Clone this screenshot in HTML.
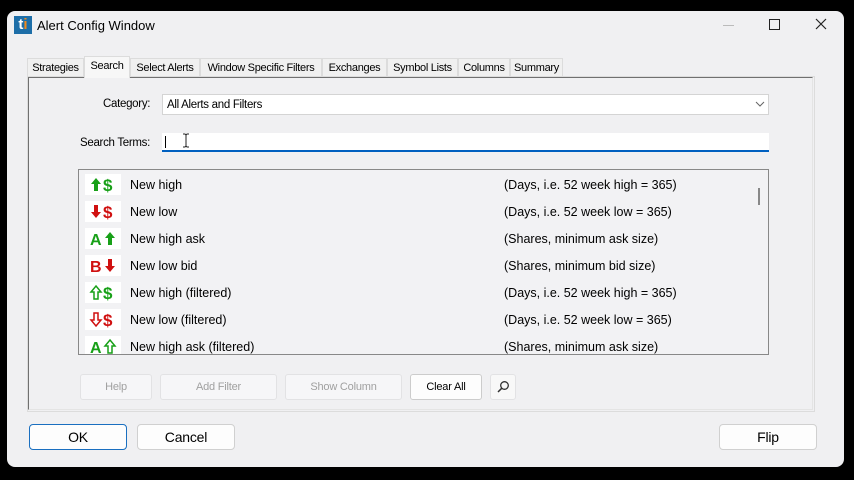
<!DOCTYPE html><html><head><style>
body{margin:0;width:854px;height:480px;background:#000;position:relative;overflow:hidden;font-family:"Liberation Sans",sans-serif;font-size:12px;color:#000}
.a{position:absolute}
.win{left:7px;top:11px;width:837px;height:456px;background:#f0f0f2;border-radius:8px}
.tab{position:absolute;top:58px;height:18px;line-height:19px;font-size:11px;text-align:center;background:#f0f0f0;border:1px solid #dcdcdc;border-bottom:none;box-sizing:border-box;letter-spacing:-0.3px}
.btn{position:absolute;background:#f6f6f8;border:1px solid #e2e2e4;border-radius:3px;box-sizing:border-box;text-align:center;font-size:11px;color:#a0a0a0;line-height:25px;letter-spacing:-0.2px}
.big{background:#fdfdfd;border:1px solid #d0d0d0;border-radius:4px;font-size:14px;color:#000;line-height:25px}
.row{position:absolute;left:80px;height:27px;width:676px;font-size:12.5px}
.row .t{position:absolute;left:50px;top:7px}
.row .d{position:absolute;left:424px;top:7px}
.ic{position:absolute;left:5px;top:3px;width:36px;height:21px;background:#fff}
</style></head><body>
<div class="a win"></div>
<div class="a" style="left:14px;top:16px;width:18px;height:18px;background:#1d6ea8;color:#fff;font-weight:bold;font-size:15px;line-height:18px;text-align:center">t<span style="color:#f08a1c">i</span></div>
<div class="a" style="left:37px;top:18px;font-size:13px">Alert Config Window</div>
<div class="a" style="left:723px;top:25px;width:11px;height:1px;background:#bbb"></div>
<div class="a" style="left:769px;top:19px;width:9px;height:9px;border:1px solid #222"></div>
<svg class="a" style="left:815px;top:18px" width="12" height="12"><path d="M1 1 11 11M11 1 1 11" stroke="#222" stroke-width="1.2"/></svg>

<div class="tab" style="left:27px;width:57px">Strategies</div>
<div class="tab" style="left:84px;width:46px;top:56px;height:22px;background:#f7f7f7;z-index:2">Search</div>
<div class="tab" style="left:130px;width:70px">Select Alerts</div>
<div class="tab" style="left:200px;width:122px">Window Specific Filters</div>
<div class="tab" style="left:322px;width:65px">Exchanges</div>
<div class="tab" style="left:387px;width:71px">Symbol Lists</div>
<div class="tab" style="left:458px;width:52px">Columns</div>
<div class="tab" style="left:510px;width:53px">Summary</div>

<div class="a" style="left:27px;top:76px;width:788px;height:336px;border:1px solid #dcdcdc;box-sizing:border-box;background:#f0f0f2"></div>
<div class="a" style="left:28px;top:77px;width:785px;height:333px;border-left:1px solid #707070;border-top:1px solid #707070;border-right:1px solid #e4e4e4;border-bottom:1px solid #e4e4e4;box-sizing:border-box"></div>

<div class="a" style="left:103px;top:98px;font-size:11.5px;letter-spacing:-0.3px">Category:</div>
<div class="a" style="left:162px;top:94px;width:607px;height:21px;background:#fff;border:1px solid #d4d4d4;box-sizing:border-box;font-size:11.5px;line-height:20px;padding-left:4px;letter-spacing:-0.3px">All Alerts and Filters</div>
<svg class="a" style="left:755px;top:101px" width="10" height="6"><path d="M1 1 5 5 9 1" fill="none" stroke="#666"/></svg>
<div class="a" style="left:80px;top:137px;font-size:11.5px;letter-spacing:-0.3px">Search Terms:</div>
<div class="a" style="left:162px;top:133px;width:607px;height:19px;background:#fff;border-bottom:2px solid #0060c0;box-sizing:border-box"></div>
<div class="a" style="left:165px;top:136px;width:1px;height:12px;background:#000"></div>
<svg class="a" style="left:182px;top:133px" width="8" height="15"><path d="M1 1h2l1 1 1-1h2M4 2v11M1 14h2l1-1 1 1h2" fill="none" stroke="#222"/></svg>

<div class="a" style="left:78px;top:169px;width:691px;height:186px;background:#f2f2f4;border:1px solid #888;box-sizing:border-box;overflow:hidden">
<div class="a" style="left:679px;top:18px;width:2px;height:17px;background:#888"></div>
</div>
<svg width="0" height="0" style="position:absolute"><defs>
<path id="su" d="M5 1 10 7H7V14H3V7H0Z"/>
<path id="sd" d="M5 14 10 8H7V1H3V8H0Z"/>
</defs></svg>
<div style="position:absolute;left:0;top:0;width:768px;height:354px;overflow:hidden">
<div class="row" style="top:171px"><svg class="ic" viewBox="0 0 36 21"><g transform="translate(6,3)" fill="#18a018"><use href="#su"/></g><text x="18" y="17" font-family="Liberation Sans" font-weight="bold" font-size="17" fill="#18a018">$</text></svg><div class="t">New high</div><div class="d">(Days, i.e. 52 week high = 365)</div></div>
<div class="row" style="top:198px"><svg class="ic" viewBox="0 0 36 21"><g transform="translate(6,3)" fill="#d01010"><use href="#sd"/></g><text x="18" y="17" font-family="Liberation Sans" font-weight="bold" font-size="17" fill="#d01010">$</text></svg><div class="t">New low</div><div class="d">(Days, i.e. 52 week low = 365)</div></div>
<div class="row" style="top:225px"><svg class="ic" viewBox="0 0 36 21"><text x="5" y="17" font-family="Liberation Sans" font-weight="bold" font-size="16" fill="#18a018">A</text><g transform="translate(20,3)" fill="#18a018"><use href="#su"/></g></svg><div class="t">New high ask</div><div class="d">(Shares, minimum ask size)</div></div>
<div class="row" style="top:252px"><svg class="ic" viewBox="0 0 36 21"><text x="5" y="17" font-family="Liberation Sans" font-weight="bold" font-size="16" fill="#d01010">B</text><g transform="translate(20,3)" fill="#d01010"><use href="#sd"/></g></svg><div class="t">New low bid</div><div class="d">(Shares, minimum bid size)</div></div>
<div class="row" style="top:279px"><svg class="ic" viewBox="0 0 36 21"><g transform="translate(6,3)" fill="#fff" stroke="#18a018" stroke-width="1.5"><use href="#su"/></g><text x="18" y="17" font-family="Liberation Sans" font-weight="bold" font-size="17" fill="#18a018">$</text></svg><div class="t">New high (filtered)</div><div class="d">(Days, i.e. 52 week high = 365)</div></div>
<div class="row" style="top:306px"><svg class="ic" viewBox="0 0 36 21"><g transform="translate(6,3)" fill="#fff" stroke="#d01010" stroke-width="1.5"><use href="#sd"/></g><text x="18" y="17" font-family="Liberation Sans" font-weight="bold" font-size="17" fill="#d01010">$</text></svg><div class="t">New low (filtered)</div><div class="d">(Days, i.e. 52 week low = 365)</div></div>
<div class="row" style="top:333px"><svg class="ic" viewBox="0 0 36 21"><text x="5" y="17" font-family="Liberation Sans" font-weight="bold" font-size="16" fill="#18a018">A</text><g transform="translate(20,3)" fill="#fff" stroke="#18a018" stroke-width="1.5"><use href="#su"/></g></svg><div class="t">New high ask (filtered)</div><div class="d">(Shares, minimum ask size)</div></div>
</div>

<div class="btn" style="left:80px;top:374px;width:72px;height:26px">Help</div>
<div class="btn" style="left:160px;top:374px;width:117px;height:26px">Add Filter</div>
<div class="btn" style="left:285px;top:374px;width:117px;height:26px">Show Column</div>
<div class="btn" style="left:410px;top:374px;width:72px;height:26px;background:#fdfdfd;border-color:#ccc;color:#000">Clear All</div>
<div class="btn" style="left:490px;top:374px;width:26px;height:26px;background:#f8f8f8">
<svg width="14" height="14" viewBox="0 0 14 14" style="margin-top:5px"><circle cx="8.5" cy="5.5" r="3.8" fill="none" stroke="#333" stroke-width="1.3"/><path d="M5.8 8.2 2 12" stroke="#333" stroke-width="1.5"/></svg></div>

<div class="btn big" style="left:29px;top:424px;width:98px;height:26px;border-color:#1a6fc0">OK</div>
<div class="btn big" style="left:137px;top:424px;width:98px;height:26px">Cancel</div>
<div class="btn big" style="left:719px;top:424px;width:98px;height:26px">Flip</div>
</body></html>
